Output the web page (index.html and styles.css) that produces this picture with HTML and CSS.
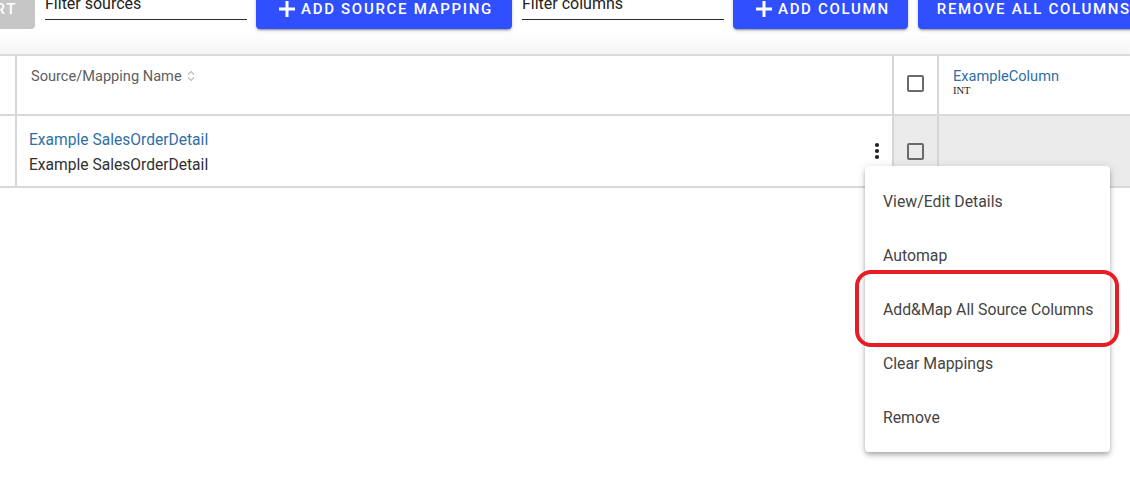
FILE: index.html
```html
<!DOCTYPE html>
<html>
<head>
<meta charset="utf-8">
<link rel="stylesheet" href="styles.css">
</head>
<body>
<div class="page">
  <div class="toolbar-wrap">
    <div class="toolbar">
      <button class="btn btn-grey">IMPORT</button>
      <div class="field"><span>Filter sources</span></div>
      <button class="btn btn-blue btn-wide"><svg class="plus" viewBox="0 0 24 24" width="24" height="24"><path d="M12 4v16M4 12h16" stroke="#fff" stroke-width="3" fill="none"/></svg><span>Add Source Mapping</span></button>
      <div class="field"><span>Filter columns</span></div>
      <button class="btn btn-blue"><svg class="plus" viewBox="0 0 24 24" width="24" height="24"><path d="M12 4v16M4 12h16" stroke="#fff" stroke-width="3" fill="none"/></svg><span>Add Column</span></button>
      <button class="btn btn-blue btn-last"><span>Remove All Columns</span></button>
    </div>
  </div>

  <div class="table">
    <div class="row head">
      <div class="cell lead"></div>
      <div class="cell name-h">
        <span>Source/Mapping Name</span>
        <svg class="sort" viewBox="0 0 8 12" width="8" height="12"><path d="M1 4.5L4 1.5L7 4.5M1 7.5L4 10.5L7 7.5" stroke="#bdbdbd" stroke-width="1.2" fill="none"/></svg>
      </div>
      <div class="cell check"><span class="box"></span></div>
      <div class="cell col-h">
        <div class="col-name">ExampleColumn</div>
        <div class="col-type">INT</div>
      </div>
    </div>
    <div class="row body">
      <div class="cell lead"></div>
      <div class="cell name-b">
        <div class="lines">
          <div class="link">Example SalesOrderDetail</div>
          <div class="plain">Example SalesOrderDetail</div>
        </div>
        <svg class="kebab" viewBox="0 0 24 24" width="24" height="24"><circle cx="12" cy="6" r="2.1" fill="#222"/><circle cx="12" cy="12" r="2.1" fill="#222"/><circle cx="12" cy="18" r="2.1" fill="#222"/></svg>
      </div>
      <div class="cell check grey"><span class="box"></span></div>
      <div class="cell grey"></div>
    </div>
  </div>

  <div class="menu">
    <div class="item">View/Edit Details</div>
    <div class="item">Automap</div>
    <div class="item">Add&amp;Map All Source Columns</div>
    <div class="item">Clear Mappings</div>
    <div class="item">Remove</div>
  </div>
  <div class="highlight"></div>
</div>
</body>
</html>
```

FILE: styles.css
```css
html, body {
  margin: 0;
  padding: 0;
  background: #fff;
}
body {
  font-family: Roboto, "Noto Sans", "Liberation Sans", sans-serif;
  width: 1130px;
  height: 493px;
  overflow: hidden;
}
.page {
  position: relative;
  width: 1130px;
  height: 493px;
  overflow: hidden;
}
.toolbar-wrap {
  margin-top: -11px;
  padding-bottom: 25px;
  background: linear-gradient(to bottom, #fff 0px, #fff 42px, #f6f6f6 65px);
}
.toolbar {
  display: flex;
  align-items: flex-start;
  height: 40px;
  white-space: nowrap;
}
.btn {
  height: 40px;
  border: none;
  border-radius: 4px;
  font-family: Roboto, "Noto Sans", sans-serif;
  font-size: 15px;
  font-weight: 500;
  letter-spacing: 1.7px;
  text-transform: uppercase;
  color: #fff;
  display: flex;
  align-items: center;
  padding: 0 18px 0 19px;
  flex: none;
  cursor: pointer;
}
.btn-wide {
  padding-right: 19px;
}
.btn-grey {
  background: #c6c6c6;
  width: 100px;
  margin-left: -65px;
  justify-content: flex-end;
  overflow: hidden;
}
.btn-blue {
  background: #304ffe;
  box-shadow: 0 3px 1px -2px rgba(0,0,0,.2), 0 2px 2px 0 rgba(0,0,0,.14), 0 1px 5px 0 rgba(0,0,0,.12);
  margin-left: 9px;
}
.btn-last {
  margin-left: 10px;
}
.plus {
  margin-right: 2px;
  flex: none;
}
.field {
  width: 202px;
  margin-left: 10px;
  padding: 5px 0 5px;
  line-height: 20px;
  font-size: 16px;
  color: #222;
  border-bottom: 1px solid #2a2a2a;
  flex: none;
}

.table {
  border-top: 2px solid #dadada;
}
.row {
  display: grid;
  grid-template-columns: 17px 877px 45px 1fr;
  border-bottom: 2px solid #d9d9d9;
}
.head { height: 58px; }
.body { height: 70px; }
.cell {
  box-sizing: border-box;
  border-right: 2px solid #d6d6d6;
}
.cell:last-child { border-right: none; }
.grey { background: #ebebeb; }

.name-h {
  padding: 10px 0 0 14px;
  font-size: 14.6px;
  line-height: 20px;
  color: #5e5e5e;
  display: flex;
  align-items: flex-start;
}
.sort {
  margin: 4px 0 0 5px;
}
.check {
  display: flex;
  align-items: center;
  justify-content: center;
  padding-right: 1px;
}
.head .check { padding-bottom: 4px; }
.box {
  width: 17px;
  height: 17px;
  box-sizing: border-box;
  border: 2px solid #6a6a6a;
  border-radius: 2px;
}
.col-h {
  padding: 10px 0 0 14px;
}
.col-name {
  font-size: 14.6px;
  line-height: 20px;
  color: #2f6fa8;
}
.col-type {
  font-family: "Liberation Serif", serif;
  font-size: 10.5px;
  line-height: 10px;
  color: #222;
}
.name-b {
  display: flex;
  align-items: center;
  padding-left: 12px;
  padding-right: 3px;
}
.lines {
  flex: 1;
  font-size: 15.6px;
  line-height: 25px;
  padding-top: 4px;
}
.link { color: #2f6fa8; }
.plain { color: #303030; }
.kebab { flex: none; }

.menu {
  position: absolute;
  left: 865px;
  top: 166px;
  width: 245px;
  padding: 9px 0 7px;
  background: #fff;
  border-radius: 4px;
  box-shadow: 0 2px 4px -1px rgba(0,0,0,.2), 0 4px 5px 0 rgba(0,0,0,.14), 0 1px 10px 0 rgba(0,0,0,.12);
}
.item {
  height: 54px;
  line-height: 54px;
  padding-left: 18px;
  font-size: 15.8px;
  color: #444;
  white-space: nowrap;
}
.highlight {
  position: absolute;
  left: 855px;
  top: 270px;
  width: 264px;
  height: 77px;
  box-sizing: border-box;
  border: 4px solid #e81c24;
  border-radius: 16px;
}
```
